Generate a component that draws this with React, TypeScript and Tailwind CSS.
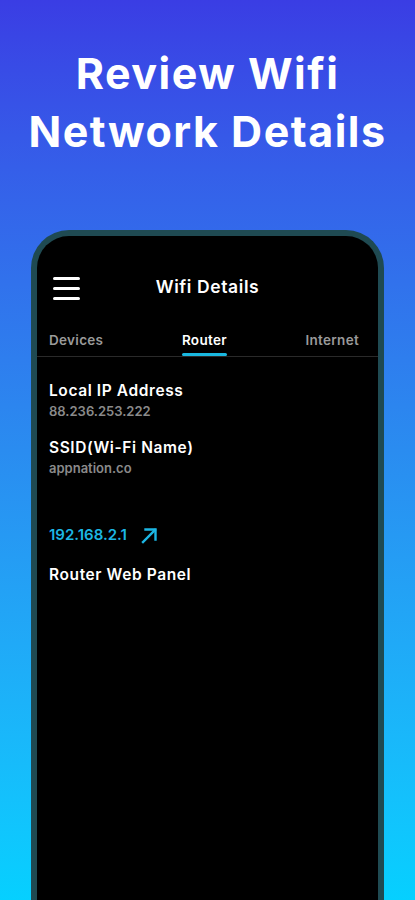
const tabs = ["Devices", "Router", "Internet"];

function InfoRow({ label, value }: { label: string; value: string }) {
  return (
    <div className="flex flex-col">
      <span className="text-[15.5px] font-semibold leading-[22px] tracking-[0.6px] text-white">{label}</span>
      <span className="text-[13px] font-semibold leading-[18px] text-[#8a8a8a]">{value}</span>
    </div>
  );
}

export default function App() {
  return (
    <div
      className="relative h-[900px] w-[415px] overflow-hidden bg-gradient-to-b from-[#3a3de4] via-[#2a8cf0] to-[#05d0ff]"
      style={{ fontFamily: "Inter, 'Noto Sans', sans-serif" }}
    >
      <h1 className="pt-[44px] text-center text-[43px] font-bold leading-[58px] tracking-[1.5px] text-white">
        Review Wifi
        <br />
        Network Details
      </h1>

      <div className="mx-[31px] mt-[70px] h-[720px] rounded-t-[38px] border-[6px] border-b-0 border-[#1f4a52] bg-black">
        <div className="relative flex h-[94px] items-center justify-center pt-[8px]">
          <div className="absolute left-[16px] top-[41px] flex w-[27px] flex-col gap-[7.5px]">
            <span className="h-[2.5px] w-full rounded bg-white" />
            <span className="h-[2.5px] w-full rounded bg-white" />
            <span className="h-[2.5px] w-full rounded bg-white" />
          </div>
          <span className="text-[17.5px] font-semibold tracking-[0.6px] text-white">Wifi Details</span>
        </div>

        <div className="flex items-end justify-between border-b border-[#2a2a2a] pl-[12px] pr-[19px] text-[13.5px] font-semibold tracking-[0.3px]">
          {tabs.map((t) => (
            <div key={t} className="flex flex-col items-center">
              <span className={t === "Router" ? "text-white" : "text-[#9a9a9a]"}>{t}</span>
              <span
                className={`mt-[3px] h-[3px] w-full rounded-full ${
                  t === "Router" ? "bg-[#1ab8e0]" : "bg-transparent"
                }`}
              />
            </div>
          ))}
        </div>

        <div className="flex flex-col px-[12px] pt-[23px]">
          <InfoRow label="Local IP Address" value="88.236.253.222" />
          <div className="mt-[17px]">
            <InfoRow label="SSID(Wi-Fi Name)" value="appnation.co" />
          </div>
          <div className="mt-[47px] flex items-center gap-[14px] text-[15px] font-semibold text-[#1cb6e4]">
            192.168.2.1
            <svg width="16" height="16" viewBox="0 0 16 16" fill="none" stroke="currentColor" strokeWidth={2.4} strokeLinecap="square">
              <path d="M2 14 14 2" />
              <path d="M4.5 1.5h10v10" />
            </svg>
          </div>
          <span className="mt-[16px] text-[15.5px] font-semibold tracking-[0.6px] text-white">Router Web Panel</span>
        </div>
      </div>
    </div>
  );
}
